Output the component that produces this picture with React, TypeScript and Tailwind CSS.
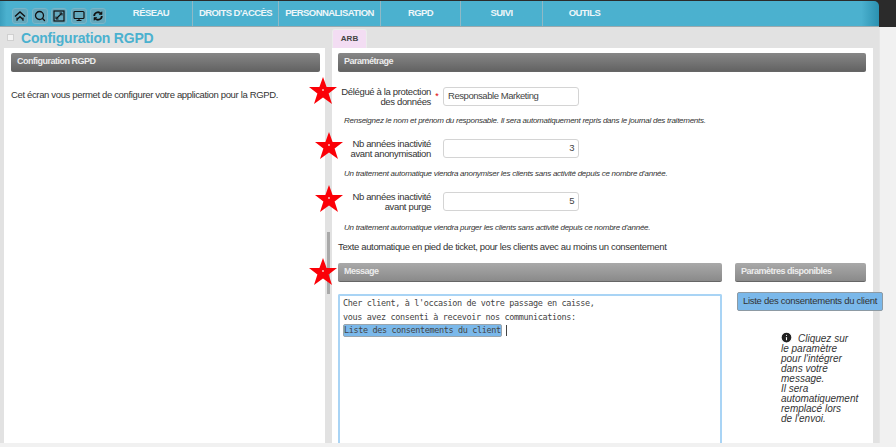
import React from 'react';
import { Search, Monitor, Info } from 'lucide-react';

const tabs = [
  { label: 'RÉSEAU', width: 'w-[83px]' },
  { label: 'DROITS D\'ACCÈS', width: 'w-[86px]' },
  { label: 'PERSONNALISATION', width: 'w-[102px]' },
  { label: 'RGPD', width: 'w-[80px]' },
  { label: 'SUIVI', width: 'w-[82px]' },
  { label: 'OUTILS', width: 'w-[83px] border-r-0' },
];

const HomeIcon = () => (
  <svg viewBox="0 0 12 12" className="w-[12px] h-[12px]" fill="none" stroke="#111" strokeWidth="1.4">
    <path d="M1 6.5 6 2l5 4.5" />
    <path d="M3 9.5 6 6.8l3 2.7" />
    <path d="M3 7.5V11M9 7.5V11" strokeWidth="1" />
  </svg>
);

const ExpandIcon = () => (
  <svg viewBox="0 0 12 12" className="w-[12px] h-[12px]" fill="none" stroke="#111">
    <rect x="1" y="1" width="10" height="10" strokeWidth="1.2" />
    <path d="M3.5 8.5 8.5 3.5" strokeWidth="1.2" />
    <path d="M6.5 3h2.5v2.5M3 6.5V9h2.5" strokeWidth="1" />
  </svg>
);

const ReloadIcon = () => (
  <svg viewBox="0 0 12 12" className="w-[12px] h-[12px]" fill="none" stroke="#111" strokeWidth="1.8">
    <path d="M2.2 6a3.8 3.8 0 0 1 6.6-2.5" />
    <path d="M9.8 6a3.8 3.8 0 0 1-6.6 2.5" />
    <path d="M10 1.5v3H7M2 10.5v-3h3" fill="#111" strokeWidth="0.6" />
  </svg>
);

const navButtons = [
  <HomeIcon key="home" />,
  <Search key="search" size={12} strokeWidth={2.6} color="#111" />,
  <ExpandIcon key="expand" />,
  <Monitor key="monitor" size={12} strokeWidth={2.4} color="#111" />,
  <ReloadIcon key="reload" />,
];

const Star = ({ className }: { className: string }) => (
  <svg viewBox="0 0 30 30" className={`absolute w-[30px] h-[30px] ${className}`}>
    <polygon fill="#fb0007" points="15,1 18.6,11 29,11 20.6,17.5 24,28 15,21.5 6,28 9.4,17.5 1,11 11.4,11" />
    <circle cx="15" cy="14" r="1" fill="#f9c0c0" />
  </svg>
);

const SectionBar = ({ title, light, className }: { title: string; light?: boolean; className: string }) => (
  <div
    className={`h-[19px] rounded-[2px] flex items-center pl-[6px] text-[9px] tracking-[-0.5px] font-bold text-[#ececec] border-b border-[#666] ${
      light ? 'bg-gradient-to-b from-[#a9a9a9] to-[#8a8a8a]' : 'bg-gradient-to-b from-[#878787] to-[#636363]'
    } ${className}`}
  >
    {title}
  </div>
);

const Field = ({ label, value, right, mandatory, help, helpGap }: { label: React.ReactNode; value: string; right?: boolean; mandatory?: boolean; help: string; helpGap: string }) => (
  <div>
    <div className="flex items-center h-[19px]">
      <div className="w-[93px] text-right text-[9.5px] tracking-[-0.35px] leading-[10px] text-[#333]">{label}</div>
      <div className="w-[12px] text-center text-[9px] leading-[9px] text-[#e00000]">{mandatory ? '*' : ''}</div>
      <div className={`w-[136px] h-[19px] border border-[#d4d4d4] rounded-[3px] bg-white flex items-center px-[4px] text-[9.5px] tracking-[-0.45px] text-[#444] ${right ? 'justify-end' : ''}`}>
        {value}
      </div>
    </div>
    <p className={`${helpGap} pl-[6px] text-[8px] tracking-[-0.26px] leading-[10px] italic text-[#333]`}>{help}</p>
  </div>
);

export default function App() {
  return (
    <div className="relative w-[896px] h-[447px] overflow-hidden flex flex-col bg-[#f1f1f1] font-['Liberation_Sans',Arial,sans-serif]">
      <div className="flex h-[27px] shrink-0 bg-[#2b2b2b]">
        <nav className="w-[879px] mt-px flex rounded-tr-[5px] bg-gradient-to-r from-[#4bb1cf] from-[98%] to-[#2a91b1] border-b border-[#9aa9ae]">
          <div className="w-[110px] pl-[12px] pt-[7px] flex items-start gap-[3.5px] bg-gradient-to-r from-[#3a9ebd] from-0% to-[#4bb1cf] to-[6%]">
            {navButtons.map((icon, i) => (
              <div key={i} className="w-[16px] h-[16px] rounded-[3px] bg-[#64a8bd] border border-[#78b5c8] flex items-center justify-center">
                {icon}
              </div>
            ))}
          </div>
          {tabs.map((t) => (
            <div
              key={t.label}
              className={`${t.width} border-r border-[#8fb9c6] flex items-center justify-center whitespace-nowrap text-[9.5px] tracking-[-0.55px] font-bold text-[#eef6f9]`}
            >
              {t.label}
            </div>
          ))}
        </nav>
      </div>

      <div className="w-[880px] h-[416px] shrink-0 flex flex-col bg-[#e2e2e2] border-r border-[#e6e6e6]">
        <div className="h-[21px] shrink-0 flex">
          <div className="w-[332px] flex items-center pl-[7px]">
            <span className="w-[7px] h-[7px] bg-[#f4f4f4] border border-[#d0d0d0]" />
            <h1 className="ml-[7px] text-[14px] tracking-[-0.2px] font-bold text-[#4bb1cf] leading-none">Configuration RGPD</h1>
          </div>
          <div className="mt-[2px] w-[35px] rounded-t-[3px] bg-[#f3ddf3] border-t border-x border-[#ececec] flex items-center justify-center text-[8px] font-bold text-[#444]">
            ARB
          </div>
        </div>

        <div className="flex-1 min-h-0 flex">
          <section className="ml-[4px] w-[321px] bg-white pt-[5px] pl-[7px] pr-[5px]">
            <SectionBar title="Configuration RGPD" className="w-[309px]" />
            <p className="mt-[17px] text-[9.5px] tracking-[-0.35px] leading-[12px] text-[#333]">Cet écran vous permet de configurer votre application pour la RGPD.</p>
          </section>

          <div className="w-[7px] flex justify-center pt-[184px]">
            <div className="w-[3px] h-[62px] bg-[#a9a9a9]" />
          </div>

          <section className="w-[541px] bg-white pt-[5px] pl-[6px]">
            <SectionBar title="Paramétrage" className="w-[528px]" />
            <div className="mt-[15px] flex flex-col gap-[13px]">
              <Field
                label={<>Délégué à la protection<br />des données</>}
                value="Responsable Marketing"
                mandatory
                helpGap="mt-[10px]"
                help="Renseignez le nom et prénom du responsable. Il sera automatiquement repris dans le journal des traitements."
              />
              <Field
                label={<>Nb années inactivité<br />avant anonymisation</>}
                value="3"
                right
                helpGap="mt-[11px]"
                help="Un traitement automatique viendra anonymiser les clients sans activité depuis ce nombre d'année."
              />
              <Field
                label={<>Nb années inactivité<br />avant purge</>}
                value="5"
                right
                helpGap="mt-[12px]"
                help="Un traitement automatique viendra purger les clients sans activité depuis ce nombre d'année."
              />
            </div>
            <p className="mt-[8px] text-[9.5px] tracking-[-0.35px] leading-[12px] text-[#333]">Texte automatique en pied de ticket, pour les clients avec au moins un consentement</p>

            <div className="mt-[10px] flex">
              <div className="w-[384px]">
                <SectionBar title="Message" light className="w-full" />
                <div className="mt-[12px] h-[149px] border-2 border-b-0 border-[#a9d4f5] rounded-t-[2px] pl-[3px] pt-px font-['DejaVu_Sans_Mono','Liberation_Mono',monospace] text-[8.5px] tracking-[-0.37px] leading-[13.5px] text-[#444]">
                  <div>Cher client, à l'occasion de votre passage en caisse,</div>
                  <div>vous avez consenti à recevoir nos communications:</div>
                  <div className="flex items-center">
                    <span className="bg-[#7ab8ea] border border-[#9aa5ad] rounded-[2px] leading-[11px]">Liste des consentements du client</span>
                    <span className="ml-[4px] w-px h-[11px] bg-[#444]" />
                  </div>
                </div>
              </div>
              <div className="ml-[13px] w-[131px]">
                <SectionBar title="Paramètres disponibles" light className="w-full" />
                <div className="mt-[10px] ml-[2px] w-[146px] h-[19px] flex items-center justify-center rounded-[2px] bg-[#7ab8ea] border border-[#8d9aa3] text-[9.5px] tracking-[-0.27px] text-[#333] whitespace-nowrap">
                  Liste des consentements du client
                </div>
                <div className="mt-[20px] ml-[46px] text-[10px] leading-[10px] italic text-[#333] whitespace-nowrap">
                  <Info size={13} fill="#222" stroke="#fff" strokeWidth={2} className="inline-block align-[-2px] -ml-px mr-[5px]" />
                  Cliquez sur<br />le paramètre<br />pour l'intégrer<br />dans votre<br />message.<br />Il sera<br />automatiquement<br />remplacé lors<br />de l'envoi.
                </div>
              </div>
            </div>
          </section>
        </div>
      </div>

      <Star className="left-[308px] top-[76px]" />
      <Star className="left-[314px] top-[131px]" />
      <Star className="left-[314px] top-[184px]" />
      <Star className="left-[308px] top-[257px]" />
    </div>
  );
}
